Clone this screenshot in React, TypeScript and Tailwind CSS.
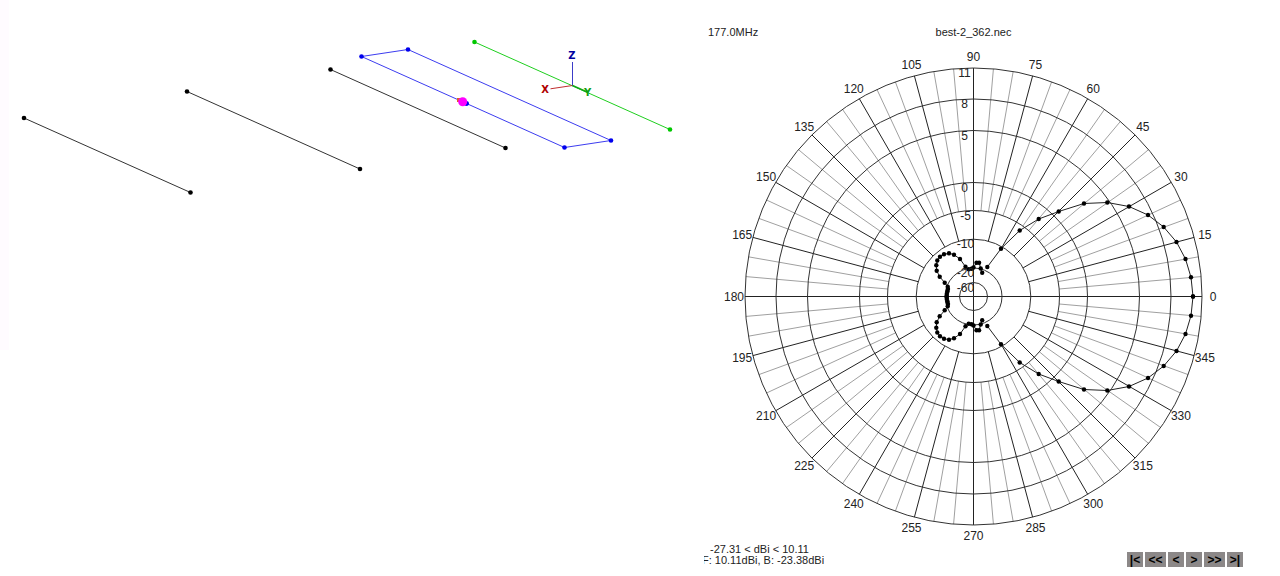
type Point = [number, number];

const ELEMENTS: { color: string; dot: string; points: Point[] }[] = [
  { color: "#333333", dot: "#000000", points: [[24, 118], [190.5, 192.5]] },
  { color: "#333333", dot: "#000000", points: [[187, 91.5], [360, 169]] },
  { color: "#333333", dot: "#000000", points: [[330.5, 69.5], [505.5, 148]] },
  { color: "#1fcf1f", dot: "#00c800", points: [[474.5, 42], [670, 129.5]] },
  { color: "#3c3cf0", dot: "#0000ee", points: [[466.5, 103.5], [361.5, 56.5], [408, 49.5], [611, 140.5], [564.5, 147.5], [466.5, 103.5]] },
];

function AntennaView() {
  return (
    <svg viewBox="0 0 704 576" className="block h-auto w-full" role="img" aria-label="Antenna geometry">
      <rect x="0" y="0" width="9" height="350" fill="#fffbff" />
      {ELEMENTS.map((el, i) => (
        <g key={i}>
          <polyline points={el.points.map((p) => p.join(",")).join(" ")} fill="none" stroke={el.color} strokeWidth="1" />
          {el.points.map(([x, y], j) => (
            <circle key={j} cx={x} cy={y} r="2.3" fill={el.dot} />
          ))}
        </g>
      ))}
      <rect x="457" y="98" width="4" height="4" fill="#e06020" />
      <circle cx="462.7" cy="101.7" r="4.5" fill="#ff00ff" />
      <line x1="572.5" y1="62" x2="572.5" y2="86" stroke="#3c3cc8" />
      <line x1="550.5" y1="88.8" x2="572.5" y2="85.5" stroke="#c03030" />
      <line x1="572.5" y1="85.5" x2="587" y2="92" stroke="#10a818" strokeWidth="1.5" />
      <g className="font-['DejaVu_Sans'] text-[10px] font-bold" textAnchor="middle">
        <text x="572" y="59" fill="#0000a0">Z</text>
        <text x="545" y="93" fill="#b00000">X</text>
        <text x="587.5" y="96" fill="#10a010">Y</text>
      </g>
    </svg>
  );
}

const CX = 269.5;
const CY = 252.5;

const RINGS = [
  { r: 14, label: "-60" },
  { r: 28.5, label: "-20" },
  { r: 57.3, label: "-10" },
  { r: 86, label: "-5" },
  { r: 114, label: "0" },
  { r: 166, label: "5" },
  { r: 197.5, label: "8" },
  { r: 228.5, label: "11" },
];

const OUTER = 228.5;

/* Offsets from the centre of the chart, y upwards. */
const MAIN_LOBE: Point[] = [
  [219.5, 0], [217.5, 19.2], [212, 37.5], [203, 54.5], [190.2, 69.5], [174.5, 81.5],
  [155.5, 90], [133.8, 94], [110.5, 93], [85.2, 85], [65.2, 77.5], [46.2, 66], [27.5, 47.8], [13.8, 29.5],
];

const BACK_LOBES: Point[] = [
  [8.7, 23.8], [7.2, 28], [5.6, 33.8], [3, 33.8], [0, 29], [-2, 27.8], [-4.8, 27.2],
  [-8, 29.8], [-13.5, 37.5], [-19.5, 41.8], [-24.5, 43.2], [-29.5, 42.2], [-33.5, 39.8],
  [-36.2, 36], [-37.2, 31.2], [-36.8, 25.8], [-33.8, 19.8], [-28.8, 13.8], [-25.8, 9.8],
  [-25.5, 7.5], [-26, 5], [-26.6, 2.5], [-26.8, 0],
];

const flip = (pts: Point[]): Point[] => pts.map(([x, y]) => [x, -y]);
const toPath = (pts: Point[]) => pts.map(([x, y]) => `${CX + x},${CY - y}`).join(" ");
const TRACES = [MAIN_LOBE, flip(MAIN_LOBE), BACK_LOBES, flip(BACK_LOBES)];

function Spoke({ angle }: { angle: number }) {
  const major = angle % 15 === 0;
  const inner = angle % 90 === 0 ? 0 : major ? 57.3 : 86;
  const a = (angle * Math.PI) / 180;
  return (
    <line
      x1={CX + inner * Math.cos(a)}
      y1={CY - inner * Math.sin(a)}
      x2={CX + OUTER * Math.cos(a)}
      y2={CY - OUTER * Math.sin(a)}
      stroke={major ? "#222222" : "#a0a0a0"}
    />
  );
}

function PolarChart() {
  const spokes = Array.from({ length: 72 }, (_, i) => i * 5);
  const bearings = Array.from({ length: 24 }, (_, i) => i * 15);
  return (
    <svg viewBox="0 0 539 500" className="block h-auto w-full" role="img" aria-label="Radiation pattern">
      {spokes.filter((a) => a % 15 !== 0).map((a) => <Spoke key={a} angle={a} />)}
      {bearings.map((a) => <Spoke key={a} angle={a} />)}
      {RINGS.map(({ r }) => (
        <circle key={r} cx={CX} cy={CY} r={r} fill="none" stroke="#333333" />
      ))}
      {TRACES.map((pts, i) => (
        <g key={i}>
          <polyline points={toPath(pts)} fill="none" stroke="#222222" />
          {pts.map(([x, y], j) => (
            <circle key={j} cx={CX + x} cy={CY - y} r="2.2" fill="#000000" />
          ))}
        </g>
      ))}
      <g className="text-[12px]" fill="#222222" textAnchor="middle">
        {RINGS.map(({ r, label }) => (
          <text key={label} x={CX - (label.startsWith("-") ? 8 : 9)} y={CY - r + 9}>{label}</text>
        ))}
        {bearings.map((a) => {
          const rad = (a * Math.PI) / 180;
          return (
            <text key={a} x={CX + 239.5 * Math.cos(rad)} y={CY - 239.5 * Math.sin(rad) + 4}>
              {a}
            </text>
          );
        })}
      </g>
    </svg>
  );
}

const CONTROLS = [
  { text: "|<", label: "First", width: "w-4" },
  { text: "<<", label: "Fast back", width: "w-[21px]" },
  { text: "<", label: "Previous", width: "w-4" },
  { text: ">", label: "Next", width: "w-4" },
  { text: ">>", label: "Fast forward", width: "w-[21px]" },
  { text: ">|", label: "Last", width: "w-4" },
];

export default function App() {
  return (
    <main className="flex min-h-screen items-start overflow-hidden bg-white font-['Liberation_Sans',Arial,sans-serif] text-[#222222]">
      <section className="w-[55%] shrink-0">
        <AntennaView />
      </section>
      <section className="w-[42.11%]">
        <header className="grid h-11 grid-cols-3 pt-6 text-[11px] leading-4">
          <span className="pl-1">177.0MHz</span>
          <h1 className="text-center">best-2_362.nec</h1>
        </header>
        <PolarChart />
        <footer className="flex items-start justify-between">
          <div className="overflow-hidden text-[11px] leading-[11px] whitespace-nowrap">
            <p className="pl-1.5">-27.31 &lt; dBi &lt; 10.11</p>
            <p className="-ml-0.5">F: 10.11dBi, B: -23.38dBi</p>
          </div>
          <nav className="flex gap-[2px] pt-2" aria-label="Frequency steps">
            {CONTROLS.map((c) => (
              <button
                key={c.label}
                type="button"
                aria-label={c.label}
                className={`${c.width} flex h-[15px] items-center justify-center bg-[#8c8888] text-[12px] leading-none font-bold text-black`}
              >
                {c.text}
              </button>
            ))}
          </nav>
        </footer>
      </section>
    </main>
  );
}
